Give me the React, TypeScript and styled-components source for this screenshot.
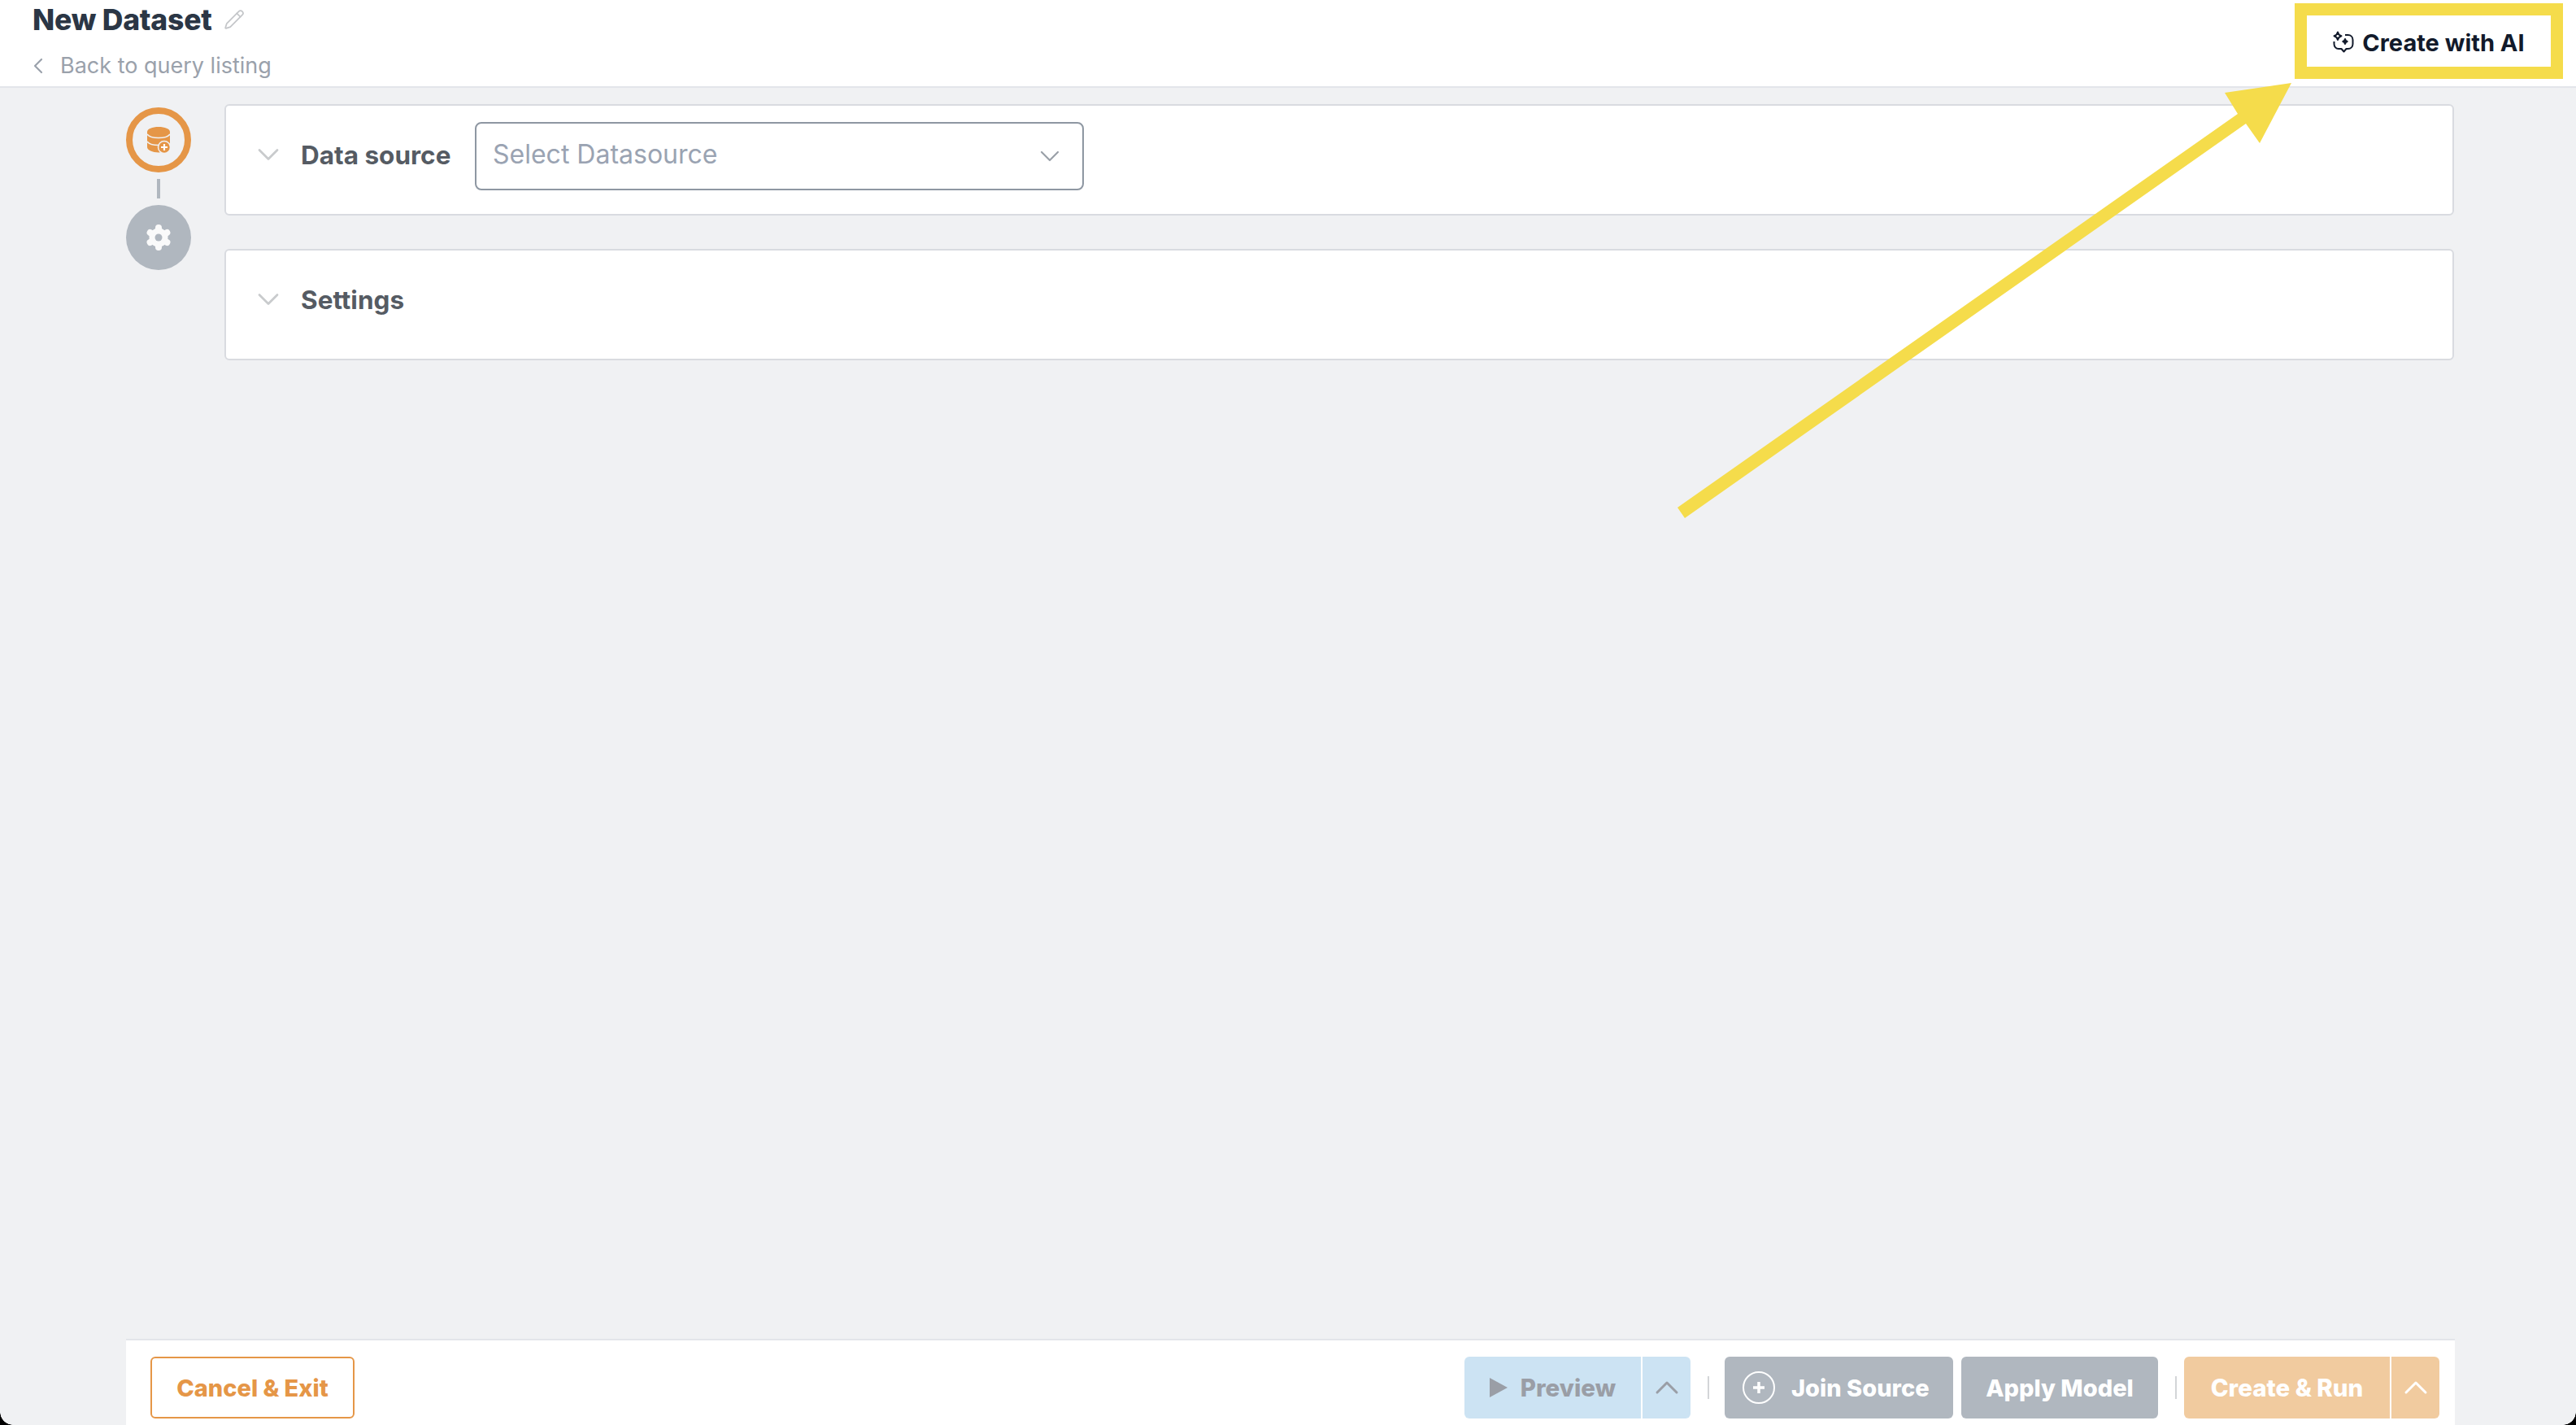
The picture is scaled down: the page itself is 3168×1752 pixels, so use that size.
import { ChevronDown, ChevronLeft, ChevronUp, Pencil } from "lucide-react";
import styled, { createGlobalStyle } from "styled-components";

const GlobalStyle = createGlobalStyle`
  html, body {
    margin: 0;
    padding: 0;
    background: #f0f1f3;
    font-family: "Inter", "Liberation Sans", sans-serif;
  }
  * {
    box-sizing: border-box;
  }
`;

const DatabasePlus = () => (
  <svg width="28" height="32" viewBox="0 0 28 32">
    <path
      d="M0 6C0 2.500 6.500 0 14 0s14 2.500 14 6v19c0 3.500-6.500 6.500-14 6.500S0 28.500 0 25z"
      fill="#e59647"
    />
    <path d="M0 9c2 3.200 7.500 4.600 14 4.600S26 12.200 28 9M0 18c2 3.200 7.500 4.600 14 4.600" fill="none" stroke="#f0f1f3" strokeWidth="1.500" />
    <circle cx="21" cy="25" r="7.500" fill="#e59647" stroke="#f0f1f3" strokeWidth="1.500" />
    <path d="M21 21v8M17 25h8" stroke="#fff" strokeWidth="2.200" />
  </svg>
);

const GearMark = () => (
  <svg width="32" height="32" viewBox="0 0 32 32">
    <circle cx="16" cy="16" r="11.500" fill="#fafafa" />
    <g stroke="#fafafa" strokeWidth="8" strokeLinecap="round">
      <path d="M16 4v24" />
      <path d="M5.600 10l20.800 12" />
      <path d="M26.400 10L5.600 22" />
    </g>
    <circle cx="16" cy="16" r="4.500" fill="#b0b7bf" />
  </svg>
);

const AiBubble = () => (
  <svg width="27" height="28" viewBox="0 0 27 28" fill="none" stroke="#121a2b" strokeWidth="2" strokeLinejoin="round">
    <path d="M7 1.500c.6 3 1.600 4 4.500 4.800-2.900.8-3.900 1.800-4.500 4.800-.6-3-1.600-4-4.500-4.800 2.900-.8 3.900-1.800 4.500-4.800z" />
    <path d="M16 5h3.500c3.500 0 6 2.500 6 6v5c0 3.500-2.500 6-6 6h-2l-3 3.500-3-3.500H8c-3 0-5.500-2.500-5.500-6v-3" />
    <path d="M16 10c.4 1.800 1 2.400 2.700 3-1.700.6-2.300 1.200-2.700 3-.4-1.800-1-2.400-2.700-3 1.700-.6 2.300-1.200 2.700-3z" fill="#121a2b" />
  </svg>
);

const PlayMark = () => (
  <svg width="22" height="24" viewBox="0 0 22 24" fill="currentColor">
    <polygon points="0,0 22,12 0,24" />
  </svg>
);

const JoinMark = () => (
  <svg width="40" height="40" viewBox="0 0 40 40" fill="none" stroke="#fff">
    <circle cx="20" cy="20" r="19" strokeWidth="2" />
    <path d="M20 13v14M13 20h14" strokeWidth="3.500" />
  </svg>
);

const App = () => {
  return (
    <Page>
      <GlobalStyle />
      <Header>
        <div>
          <TitleRow>
            <Title>New Dataset</Title>
            <Pencil size={26} color="#c4c6c9" strokeWidth={1.6} />
          </TitleRow>
          <BackLink>
            <ChevronLeft size={32} strokeWidth={1.6} />
            <span>Back to query listing</span>
          </BackLink>
        </div>
        <AiButton>
          <AiBubble />
          Create with AI
        </AiButton>
      </Header>

      <Body>
        <Steps>
          <StepCircle $active>
            <DatabasePlus />
          </StepCircle>
          <StepLine />
          <StepCircle>
            <GearMark />
          </StepCircle>
        </Steps>
        <Cards>
          <Card>
            <ChevronDown size={44} color="#c9cbcd" strokeWidth={1.5} />
            <CardLabel>Data source</CardLabel>
            <SelectBox>
              <Placeholder>Select Datasource</Placeholder>
              <ChevronDown size={40} color="#9aa0a8" strokeWidth={1.3} />
            </SelectBox>
          </Card>
          <Card>
            <ChevronDown size={44} color="#c9cbcd" strokeWidth={1.5} />
            <CardLabel>Settings</CardLabel>
          </Card>
        </Cards>
      </Body>

      <Footer>
        <CancelButton>Cancel &amp; Exit</CancelButton>
        <FooterActions>
          <SplitMain $tone="preview" $width={217}>
            <PlayMark />
            Preview
          </SplitMain>
          <SplitArrow $tone="preview">
            <ChevronUp size={48} strokeWidth={1.5} />
          </SplitArrow>
          <Divider />
          <JoinButton>
            <JoinMark />
            Join Source
          </JoinButton>
          <ApplyButton>Apply Model</ApplyButton>
          <Divider $tight />
          <SplitMain $tone="run" $width={253}>
            Create &amp; Run
          </SplitMain>
          <SplitArrow $tone="run">
            <ChevronUp size={48} strokeWidth={1.5} />
          </SplitArrow>
        </FooterActions>
      </Footer>

      <HighlightFrame />
      <ArrowOverlay viewBox="0 0 3168 1752">
        <polygon
          points="2063,624 2752,140 2736,114 2818,102 2779,176 2762,152 2072,637"
          fill="#f5dc4b"
        />
      </ArrowOverlay>
      <Corner $side="left" />
      <Corner $side="right" />
    </Page>
  );
};
export default App;

const Page = styled.div`
  position: relative;
  width: 3168px;
  height: 1752px;
  overflow: hidden;
  display: flex;
  flex-direction: column;
  background: #f0f1f3;
`;

const Header = styled.header`
  height: 108px;
  flex-shrink: 0;
  background: #fff;
  border-bottom: 2px solid #e3e5ea;
  padding: 0 30px 0 40px;
  display: flex;
  justify-content: space-between;
  align-items: flex-start;
`;

const TitleRow = styled.div`
  display: flex;
  align-items: center;
  gap: 14px;
  height: 48px;
`;

const Title = styled.h1`
  margin: 0;
  font-size: 35.5px;
  font-weight: 800;
  color: #2b3645;
  letter-spacing: -0.2px;
`;

const BackLink = styled.div`
  display: flex;
  align-items: center;
  gap: 11px;
  margin: 16px 0 0 -9px;
  font-size: 27px;
  color: #9aa1ab;
`;

const AiButton = styled.button`
  margin-top: 21px;
  width: 300px;
  height: 62px;
  padding: 0 3px 0 0;
  border: none;
  background: #fff;
  display: flex;
  align-items: center;
  justify-content: center;
  gap: 10px;
  font-family: inherit;
  font-size: 29px;
  font-weight: 700;
  color: #121a2b;
`;

const Body = styled.main`
  flex: 1;
  padding: 20px 150px 0 155px;
  display: flex;
  gap: 41px;
`;

const Steps = styled.div`
  width: 80px;
  display: flex;
  flex-direction: column;
  align-items: center;
  padding-top: 4px;
`;

const StepCircle = styled.div<{ $active?: boolean }>`
  width: 80px;
  height: 80px;
  border-radius: 50%;
  display: flex;
  align-items: center;
  justify-content: center;
  background: ${(p) => (p.$active ? "transparent" : "#b0b7bf")};
  border: ${(p) => (p.$active ? "8px solid #e59647" : "none")};
`;

const StepLine = styled.div`
  width: 4px;
  height: 24px;
  margin: 8px 0;
  background: #b0b7bf;
`;

const Cards = styled.div`
  flex: 1;
  display: flex;
  flex-direction: column;
  gap: 41px;
`;

const Card = styled.section`
  height: 137px;
  padding: 20px 0 0 30px;
  background: #fff;
  border: 2px solid #d9dbe0;
  border-radius: 6px;
  display: flex;
  align-items: flex-start;

  & > svg:first-child {
    margin-top: 18px;
  }
`;

const CardLabel = styled.span`
  width: 214px;
  margin: 23px 0 0 18px;
  font-size: 31.5px;
  line-height: 36px;
  font-weight: 700;
  color: #555b63;
`;

const SelectBox = styled.div`
  width: 749px;
  height: 84px;
  padding: 0 20px 0 20px;
  border: 2px solid #8e97a2;
  border-radius: 8px;
  display: flex;
  align-items: center;
  justify-content: space-between;
`;

const Placeholder = styled.span`
  position: relative;
  top: -3px;
  font-size: 32px;
  color: #9aa3b2;
`;

const Footer = styled.footer`
  height: 106px;
  flex-shrink: 0;
  margin: 0 149px 0 155px;
  padding: 20px 19px 0 30px;
  background: #fff;
  border-top: 2px solid #e3e5ea;
  display: flex;
  justify-content: space-between;
  align-items: flex-start;
`;

const CancelButton = styled.button`
  width: 251px;
  height: 76px;
  border: 2px solid #e59647;
  border-radius: 6px;
  background: #fff;
  font-family: inherit;
  font-size: 29px;
  font-weight: 800;
  color: #e59647;
`;

const FooterActions = styled.div`
  display: flex;
  align-items: center;
`;

const tones = {
  preview: { bg: "#cce3f3", fg: "#9a9ea6" },
  run: { bg: "#f1cb9f", fg: "#fff" },
};

const SplitMain = styled.button<{ $tone: keyof typeof tones; $width: number }>`
  width: ${(p) => p.$width}px;
  height: 76px;
  border: none;
  border-radius: 6px 0 0 6px;
  display: flex;
  align-items: center;
  justify-content: center;
  gap: 16px;
  font-family: inherit;
  font-size: 29.5px;
  font-weight: 800;
  background: ${(p) => tones[p.$tone].bg};
  color: ${(p) => tones[p.$tone].fg};
`;

const SplitArrow = styled.button<{ $tone: keyof typeof tones }>`
  width: 59px;
  height: 76px;
  margin-left: 2px;
  padding: 0;
  border: none;
  border-radius: 0 6px 6px 0;
  display: flex;
  align-items: center;
  justify-content: center;
  background: ${(p) => tones[p.$tone].bg};
  color: ${(p) => tones[p.$tone].fg};
`;

const Divider = styled.div<{ $tight?: boolean }>`
  width: 2px;
  height: 28px;
  margin: 0 ${(p) => (p.$tight ? 9 : 19)}px 0 21px;
  background: #d3d5d8;
`;

const GreyButton = styled.button`
  height: 76px;
  border: none;
  border-radius: 6px;
  background: #b0b7bf;
  color: #fff;
  font-family: inherit;
  font-size: 29px;
  font-weight: 800;
  display: flex;
  align-items: center;
  justify-content: center;
`;

const JoinButton = styled(GreyButton)`
  width: 281px;
  padding: 0 0 0 22px;
  justify-content: flex-start;
  gap: 20px;
`;

const ApplyButton = styled(GreyButton)`
  width: 242px;
  margin-left: 10px;
`;

// annotation drawn on top of the screenshot
const HighlightFrame = styled.div`
  position: absolute;
  left: 2822px;
  top: 4px;
  width: 330px;
  height: 93px;
  border: 15px solid #f5dc4b;
`;

const ArrowOverlay = styled.svg`
  position: absolute;
  inset: 0;
  width: 3168px;
  height: 1752px;
  pointer-events: none;
`;

const Corner = styled.div<{ $side: "left" | "right" }>`
  position: absolute;
  bottom: 0;
  ${(p) => p.$side}: 0;
  width: 16px;
  height: 16px;
  background: radial-gradient(
    circle at ${(p) => (p.$side === "left" ? "100% 0" : "0 0")},
    transparent 15.500px,
    #000 16px
  );
`;
